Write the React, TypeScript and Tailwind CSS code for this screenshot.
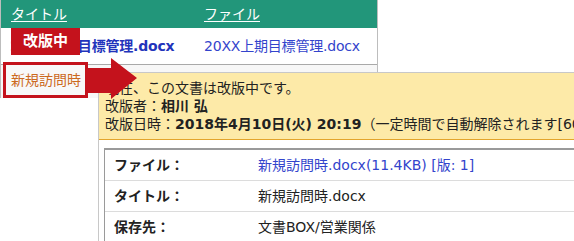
import React from "react";

export default function App() {
  const font = { fontFamily: '"DejaVu Sans", "Noto Sans CJK JP", sans-serif' };
  return (
    <div className="relative w-[574px] h-[241px] overflow-hidden bg-white" style={font}>
      {/* base table */}
      <div className="w-[378px] border-l border-r border-[#bdbdbd]">
        <div className="grid grid-cols-[193px_1fr] h-[28px] items-center bg-[#22967a] text-white text-[14px]">
          <span className="pl-[10px] underline underline-offset-2">タイトル</span>
          <span className="pl-[10px] underline underline-offset-2">ファイル</span>
        </div>
        <div className="grid grid-cols-[193px_1fr] h-[37px] items-center border-b border-[#a9a9a9] text-[14px] tracking-[-0.2px]">
          <span className="pl-[9px] font-bold text-[#2233bb] whitespace-nowrap">20XX上期目標管理.docx</span>
          <span className="pl-[10px] text-[#3344cc] whitespace-nowrap">20XX上期目標管理.docx</span>
        </div>
        <div className="h-[33px] bg-[#f7f7f7]"></div>
      </div>

      {/* popup */}
      <div className="absolute left-[98px] top-[72px] w-[520px] h-[200px] border-l border-t border-[#c8c8c8] bg-white">
        <div className="bg-[#fdeaa8] border-b border-[#e3a52c] pl-[6px] pt-[6px] pb-[6px] text-[14px] leading-[18px] text-[#222] whitespace-nowrap">
          <div>現在、この文書は改版中です。</div>
          <div>
            改版者：<span className="font-bold">相川 弘</span>
          </div>
          <div>
            改版日時：<span className="font-bold">2018年4月10日(火) 20:19</span>（一定時間で自動解除されます[60分]）
          </div>
        </div>
        <div className="ml-[5px] mt-[8px] border-l border-t-2 border-[#9a9a9a] text-[14px] text-[#222]">
          <div className="grid grid-cols-[153px_1fr] h-[31px] items-center border-b border-[#dcdcdc]">
            <span className="pl-[9px] font-bold">ファイル：</span>
            <span className="text-[#3344cc] whitespace-nowrap">新規訪問時.docx(11.4KB) [版: 1]</span>
          </div>
          <div className="grid grid-cols-[153px_1fr] h-[31px] items-center border-b border-[#dcdcdc]">
            <span className="pl-[9px] font-bold">タイトル：</span>
            <span className="whitespace-nowrap">新規訪問時.docx</span>
          </div>
          <div className="grid grid-cols-[153px_1fr] h-[31px] items-center">
            <span className="pl-[9px] font-bold">保存先：</span>
            <span className="whitespace-nowrap">文書BOX/営業関係</span>
          </div>
        </div>
      </div>

      {/* overlays */}
      <div className="absolute left-[11px] top-[28px] w-[69px] h-[27px] bg-[#c4121c] text-white font-bold text-[15px] flex items-center justify-center">
        改版中
      </div>
      <div className="absolute left-[3px] top-[62px] w-[85px] h-[36px] border-[3px] border-[#c4121c] bg-[#f8f8f8] text-[#cc6a1e] text-[14px] flex items-center pl-[5px]">
        新規訪問時
      </div>
      <svg className="absolute left-[87px] top-[56px]" width="52" height="46" viewBox="0 0 52 46">
        <polygon points="0,12 24,12 24,2 50,22 24,43 24,37 0,37" fill="#c4121c" />
      </svg>
    </div>
  );
}
